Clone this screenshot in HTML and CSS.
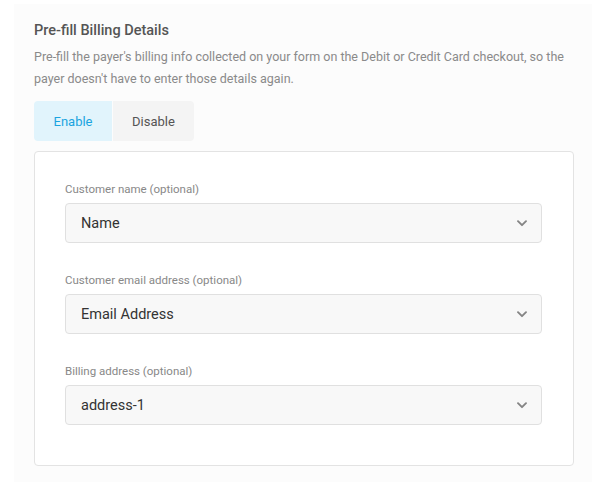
FILE: index.html
```html
<!DOCTYPE html>
<html lang="en">
<head>
<meta charset="utf-8">
<title>Pre-fill Billing Details</title>
<link rel="stylesheet" href="styles.css">
</head>
<body>
<div class="panel">
  <h2 class="title">Pre-fill Billing Details</h2>
  <p class="desc">Pre-fill the payer's billing info collected on your form on the Debit or Credit Card checkout, so the payer doesn't have to enter those details again.</p>
  <div class="toggle">
    <button class="tbtn tbtn-enable active">Enable</button>
    <button class="tbtn tbtn-disable">Disable</button>
  </div>
  <div class="card">
    <div class="field">
      <label class="label">Customer name (optional)</label>
      <div class="select"><span>Name</span><svg class="chev" viewBox="0 0 10 7" width="10" height="7"><path d="M1 1.2 L5 5.2 L9 1.2" fill="none" stroke="#858585" stroke-width="1.9" stroke-linecap="round" stroke-linejoin="round"/></svg></div>
    </div>
    <div class="field">
      <label class="label">Customer email address (optional)</label>
      <div class="select"><span>Email Address</span><svg class="chev" viewBox="0 0 10 7" width="10" height="7"><path d="M1 1.2 L5 5.2 L9 1.2" fill="none" stroke="#858585" stroke-width="1.9" stroke-linecap="round" stroke-linejoin="round"/></svg></div>
    </div>
    <div class="field">
      <label class="label">Billing address (optional)</label>
      <div class="select"><span>address-1</span><svg class="chev" viewBox="0 0 10 7" width="10" height="7"><path d="M1 1.2 L5 5.2 L9 1.2" fill="none" stroke="#858585" stroke-width="1.9" stroke-linecap="round" stroke-linejoin="round"/></svg></div>
    </div>
  </div>
</div>
</body>
</html>
```

FILE: styles.css
```css
html, body {
  margin: 0;
  padding: 0;
  background: #ffffff;
  font-family: Roboto, "Liberation Sans", Arial, sans-serif;
}
.panel {
  margin: 4px 0 0 14px;
  width: 578px;
  height: 478px;
  box-sizing: border-box;
  padding: 17px 18px 17px 20px;
  background: #fcfcfc;
}
.title {
  margin: 0;
  font-size: 14.5px;
  line-height: 20px;
  font-weight: 500;
  color: #555555;
}
.desc {
  margin: 5px 0 0;
  font-size: 12.5px;
  line-height: 22px;
  color: #8a8a8a;
}
.toggle {
  display: flex;
  gap: 1px;
  margin-top: 11px;
}
.tbtn {
  height: 40px;
  border: 0;
  padding: 0;
  font-family: inherit;
  font-size: 13px;
  background: #f4f4f4;
  color: #555555;
  text-align: center;
}
.tbtn-enable { width: 78px; border-radius: 4px 0 0 4px; }
.tbtn-disable { width: 81px; border-radius: 0 4px 4px 0; }
.tbtn.active {
  background: #e1f4fc;
  color: #1ba4e0;
}
.card {
  margin-top: 10px;
  width: 540px;
  box-sizing: border-box;
  border: 1px solid #e3e3e3;
  border-radius: 4px;
  background: #ffffff;
  padding: 29px 31px 40px 30px;
  display: flex;
  flex-direction: column;
  gap: 29px;
}
.field {
  display: flex;
  flex-direction: column;
  gap: 6px;
}
.label {
  font-size: 11.5px;
  line-height: 16px;
  color: #888888;
}
.select {
  height: 40px;
  box-sizing: border-box;
  border: 1px solid #e0e0e0;
  border-radius: 4px;
  background: #f8f8f8;
  display: flex;
  align-items: center;
  justify-content: space-between;
  padding: 0 14px 0 15px;
  font-size: 14.5px;
  color: #333333;
}
.chev { display: block; }
```
